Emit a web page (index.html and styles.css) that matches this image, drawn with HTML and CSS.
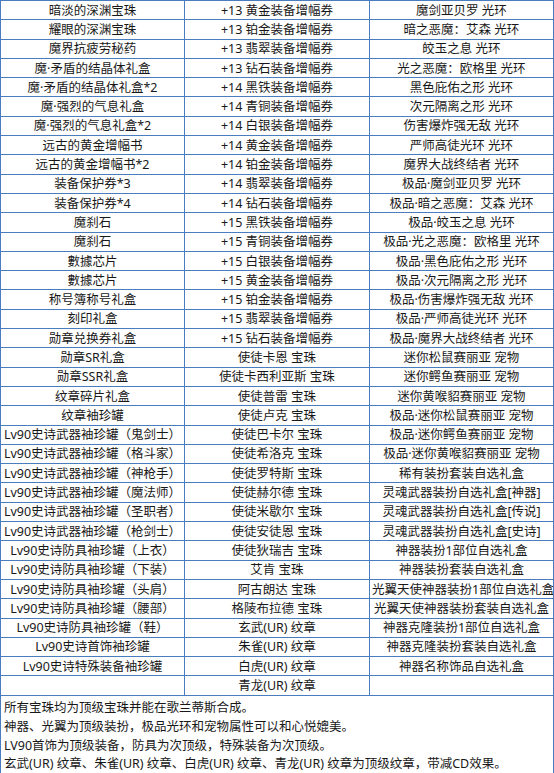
FILE: index.html
```html
<!DOCTYPE html>
<html lang="zh-CN">
<head>
<meta charset="utf-8">
<title>奖励列表</title>
<link rel="stylesheet" href="styles.css">
</head>
<body>
<table class="rewards">
<colgroup><col class="c1"><col class="c2"><col class="c3"></colgroup>
<tbody>
<tr><td>暗淡的深渊宝珠</td><td>+13 黄金装备增幅券</td><td>魔剑亚贝罗 光环</td></tr>
<tr><td>耀眼的深渊宝珠</td><td>+13 铂金装备增幅券</td><td>暗之恶魔：艾森 光环</td></tr>
<tr><td>魔界抗疲劳秘药</td><td>+13 翡翠装备增幅券</td><td>皎玉之息 光环</td></tr>
<tr><td>魔·矛盾的结晶体礼盒</td><td>+13 钻石装备增幅券</td><td>光之恶魔：欧格里 光环</td></tr>
<tr><td>魔·矛盾的结晶体礼盒*2</td><td>+14 黑铁装备增幅券</td><td>黑色庇佑之形 光环</td></tr>
<tr><td>魔·强烈的气息礼盒</td><td>+14 青铜装备增幅券</td><td>次元隔离之形 光环</td></tr>
<tr><td>魔·强烈的气息礼盒*2</td><td>+14 白银装备增幅券</td><td>伤害爆炸强无敌 光环</td></tr>
<tr><td>远古的黄金增幅书</td><td>+14 黄金装备增幅券</td><td>严师高徒光环 光环</td></tr>
<tr><td>远古的黄金增幅书*2</td><td>+14 铂金装备增幅券</td><td>魔界大战终结者 光环</td></tr>
<tr><td>装备保护券*3</td><td>+14 翡翠装备增幅券</td><td>极品·魔剑亚贝罗 光环</td></tr>
<tr><td>装备保护券*4</td><td>+14 钻石装备增幅券</td><td>极品·暗之恶魔：艾森 光环</td></tr>
<tr><td>魔刹石</td><td>+15 黑铁装备增幅券</td><td>极品·皎玉之息 光环</td></tr>
<tr><td>魔刹石</td><td>+15 青铜装备增幅券</td><td>极品·光之恶魔：欧格里 光环</td></tr>
<tr><td>數據芯片</td><td>+15 白银装备增幅券</td><td>极品·黑色庇佑之形 光环</td></tr>
<tr><td>數據芯片</td><td>+15 黄金装备增幅券</td><td>极品·次元隔离之形 光环</td></tr>
<tr><td>称号簿称号礼盒</td><td>+15 铂金装备增幅券</td><td>极品·伤害爆炸强无敌 光环</td></tr>
<tr><td>刻印礼盒</td><td>+15 翡翠装备增幅券</td><td>极品·严师高徒光环 光环</td></tr>
<tr><td>勋章兑换券礼盒</td><td>+15 钻石装备增幅券</td><td>极品·魔界大战终结者 光环</td></tr>
<tr><td>勋章SR礼盒</td><td>使徒卡恩 宝珠</td><td>迷你松鼠赛丽亚 宠物</td></tr>
<tr><td>勋章SSR礼盒</td><td>使徒卡西利亚斯 宝珠</td><td>迷你鳄鱼赛丽亚 宠物</td></tr>
<tr><td>纹章碎片礼盒</td><td>使徒普雷 宝珠</td><td>迷你黄喉貂赛丽亚 宠物</td></tr>
<tr><td>纹章袖珍罐</td><td>使徒卢克 宝珠</td><td>极品·迷你松鼠赛丽亚 宠物</td></tr>
<tr><td>Lv90史诗武器袖珍罐（鬼剑士）</td><td>使徒巴卡尔 宝珠</td><td>极品·迷你鳄鱼赛丽亚 宠物</td></tr>
<tr><td>Lv90史诗武器袖珍罐（格斗家）</td><td>使徒希洛克 宝珠</td><td>极品·迷你黄喉貂赛丽亚 宠物</td></tr>
<tr><td>Lv90史诗武器袖珍罐（神枪手）</td><td>使徒罗特斯 宝珠</td><td>稀有装扮套装自选礼盒</td></tr>
<tr><td>Lv90史诗武器袖珍罐（魔法师）</td><td>使徒赫尔德 宝珠</td><td>灵魂武器装扮自选礼盒[神器]</td></tr>
<tr><td>Lv90史诗武器袖珍罐（圣职者）</td><td>使徒米歇尔 宝珠</td><td>灵魂武器装扮自选礼盒[传说]</td></tr>
<tr><td>Lv90史诗武器袖珍罐（枪剑士）</td><td>使徒安徒恩 宝珠</td><td>灵魂武器装扮自选礼盒[史诗]</td></tr>
<tr><td>Lv90史诗防具袖珍罐（上衣）</td><td>使徒狄瑞吉 宝珠</td><td>神器装扮1部位自选礼盒</td></tr>
<tr><td>Lv90史诗防具袖珍罐（下装）</td><td>艾肯 宝珠</td><td>神器装扮套装自选礼盒</td></tr>
<tr><td>Lv90史诗防具袖珍罐（头肩）</td><td>阿古朗达 宝珠</td><td>光翼天使神器装扮1部位自选礼盒</td></tr>
<tr><td>Lv90史诗防具袖珍罐（腰部）</td><td>格陵布拉德 宝珠</td><td>光翼天使神器装扮套装自选礼盒</td></tr>
<tr><td>Lv90史诗防具袖珍罐（鞋）</td><td>玄武(UR) 纹章</td><td>神器克隆装扮1部位自选礼盒</td></tr>
<tr><td>Lv90史诗首饰袖珍罐</td><td>朱雀(UR) 纹章</td><td>神器克隆装扮套装自选礼盒</td></tr>
<tr><td>Lv90史诗特殊装备袖珍罐</td><td>白虎(UR) 纹章</td><td>神器名称饰品自选礼盒</td></tr>
<tr><td></td><td>青龙(UR) 纹章</td><td></td></tr>
<tr class="notes-row"><td colspan="3" class="notes">
<p>所有宝珠均为顶级宝珠并能在歌兰蒂斯合成。</p>
<p>神器、光翼为顶级装扮，极品光环和宠物属性可以和心悦媲美。</p>
<p>LV90首饰为顶级装备，防具为次顶级，特殊装备为次顶级。</p>
<p>玄武(UR) 纹章、朱雀(UR) 纹章、白虎(UR) 纹章、青龙(UR) 纹章为顶级纹章，带减CD效果。</p>
</td></tr>
</tbody>
</table>
</body>
</html>
```

FILE: styles.css
```css
html, body {
  margin: 0;
  padding: 0;
  background: #ffffff;
}

body {
  width: 554px;
  font-family: "Noto Sans", "Noto Sans CJK SC", sans-serif;
  font-size: 12.5px;
  color: #181818;
}

.rewards {
  width: 553px;
  border-collapse: collapse;
  table-layout: fixed;
  border: 1.5px solid #4a7cc0;
}

.c1 { width: 184px; }
.c2 { width: 185px; }
.c3 { width: 184px; }

.rewards td {
  border: 1.5px solid #4a7cc0;
  height: 19.3px;
  padding: 0 2px;
  line-height: 17px;
  text-align: center;
  white-space: nowrap;
  overflow: hidden;
  box-sizing: border-box;
}

.rewards td.notes {
  text-align: left;
  vertical-align: top;
  padding: 3px 3px 0;
  height: 76px;
  line-height: 18.9px;
}

.notes p {
  margin: 0;
}
```
